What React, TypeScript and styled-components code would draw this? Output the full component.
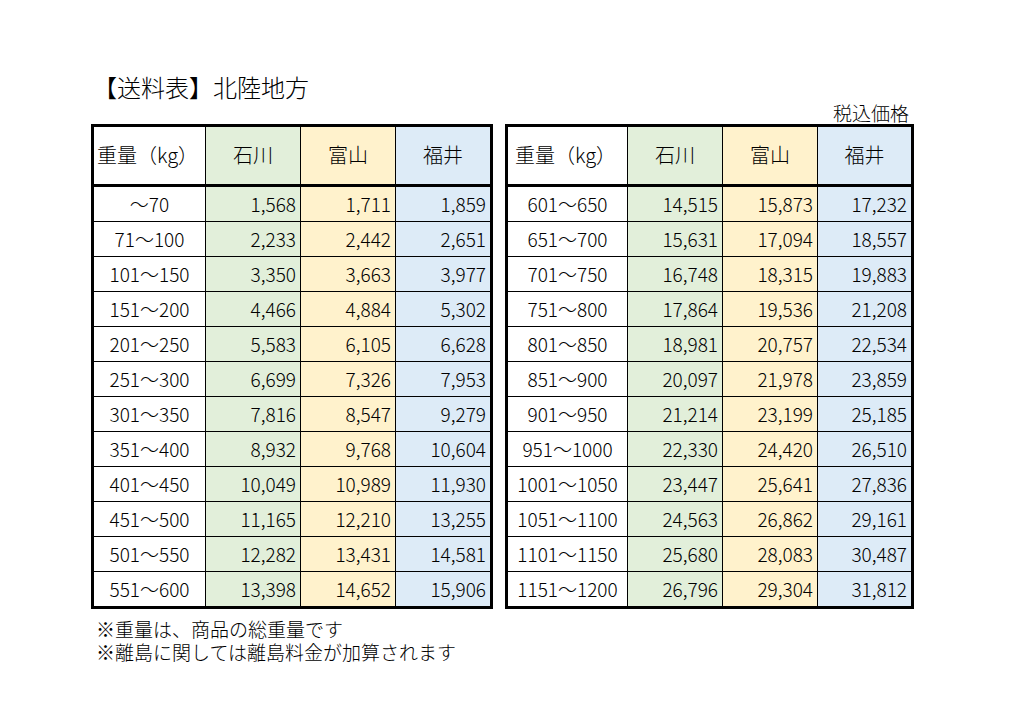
import styled, { createGlobalStyle } from 'styled-components'

const GlobalStyle = createGlobalStyle`
    html, body {
        margin: 0;
        padding: 0;
        background: #fff;
    }
    body {
        font-family: "Noto Sans CJK JP", "Noto Sans", sans-serif;
        font-weight: 300;
        color: #000;
    }
`

type Region = 'ishikawa' | 'toyama' | 'fukui'

const regionColor: Record<Region, string> = {
    ishikawa: '#e2efda',
    toyama: '#fff2cc',
    fukui: '#ddebf7',
}

type Row = [string, number, number, number]

const leftRows: Row[] = [
    ['～70', 1568, 1711, 1859],
    ['71～100', 2233, 2442, 2651],
    ['101～150', 3350, 3663, 3977],
    ['151～200', 4466, 4884, 5302],
    ['201～250', 5583, 6105, 6628],
    ['251～300', 6699, 7326, 7953],
    ['301～350', 7816, 8547, 9279],
    ['351～400', 8932, 9768, 10604],
    ['401～450', 10049, 10989, 11930],
    ['451～500', 11165, 12210, 13255],
    ['501～550', 12282, 13431, 14581],
    ['551～600', 13398, 14652, 15906],
]

const rightRows: Row[] = [
    ['601～650', 14515, 15873, 17232],
    ['651～700', 15631, 17094, 18557],
    ['701～750', 16748, 18315, 19883],
    ['751～800', 17864, 19536, 21208],
    ['801～850', 18981, 20757, 22534],
    ['851～900', 20097, 21978, 23859],
    ['901～950', 21214, 23199, 25185],
    ['951～1000', 22330, 24420, 26510],
    ['1001～1050', 23447, 25641, 27836],
    ['1051～1100', 24563, 26862, 29161],
    ['1101～1150', 25680, 28083, 30487],
    ['1151～1200', 26796, 29304, 31812],
]

const regions: { key: Region; label: string }[] = [
    { key: 'ishikawa', label: '石川' },
    { key: 'toyama', label: '富山' },
    { key: 'fukui', label: '福井' },
]

const Page = styled.div`
    padding: 72px 0 0 91px;
    width: 823px;
`

const Title = styled.h1`
    margin: 0 0 0 2px;
    font-size: 24px;
    font-weight: 300;
    line-height: 30px;
`

const TaxNote = styled.div`
    text-align: right;
    font-size: 19px;
    line-height: 22px;
    padding-right: 5px;
`

const Tables = styled.div`
    display: flex;
    gap: 12px;
`

const Grid = styled.div<{ $weightWidth: number; $lastWidth: number }>`
    display: grid;
    grid-template-columns: ${p => p.$weightWidth}px 95px 95px ${p => p.$lastWidth}px;
    grid-template-rows: 60px repeat(11, 35px) 34px;
    border: 3px solid #000;
`

const Cell = styled.div<{ $region?: Region; $head?: boolean; $lastCol?: boolean; $lastRow?: boolean; $align?: 'center' | 'right' }>`
    box-sizing: border-box;
    display: flex;
    align-items: center;
    justify-content: ${p => (p.$align === 'right' ? 'flex-end' : 'center')};
    padding: 0 ${p => (p.$align === 'right' ? '4px' : '0')} 2px 0;
    background: ${p => (p.$region ? regionColor[p.$region] : '#fff')};
    border-right: ${p => (p.$lastCol ? 'none' : '1px solid #000')};
    border-bottom: ${p => (p.$head ? '3px solid #000' : p.$lastRow ? 'none' : '1px solid #000')};
    font-size: ${p => (p.$head ? '20px' : '19px')};
    white-space: nowrap;
`

const HeadLabel = styled.span`
    margin-right: 4px;
`

const Notes = styled.div`
    margin-top: 8px;
    padding-left: 5px;
    font-size: 19px;
    line-height: 23px;
`

function fmt(n: number) {
    return n.toLocaleString('en-US')
}

function RateTable({ rows, weightWidth, lastWidth }: { rows: Row[]; weightWidth: number; lastWidth: number }) {
    return (
        <Grid $weightWidth={weightWidth} $lastWidth={lastWidth}>
            <Cell $head>
                <HeadLabel>重量（kg）</HeadLabel>
            </Cell>
            {regions.map((r, i) => (
                <Cell key={r.key} $head $region={r.key} $lastCol={i === 2}>
                    {r.label}
                </Cell>
            ))}
            {rows.map((row, ri) => {
                const lastRow = ri === rows.length - 1
                return [
                    <Cell key={`w${ri}`} $lastRow={lastRow}>
                        {row[0]}
                    </Cell>,
                    ...regions.map((r, ci) => (
                        <Cell
                            key={`${r.key}${ri}`}
                            $region={r.key}
                            $align="right"
                            $lastCol={ci === 2}
                            $lastRow={lastRow}
                        >
                            {fmt(row[ci + 1])}
                        </Cell>
                    )),
                ]
            })}
        </Grid>
    )
}

export default function App() {
    return (
        <>
            <GlobalStyle />
            <Page>
                <Title>【送料表】北陸地方</Title>
                <TaxNote>税込価格</TaxNote>
                <Tables>
                    <RateTable rows={leftRows} weightWidth={112} lastWidth={94} />
                    <RateTable rows={rightRows} weightWidth={120} lastWidth={93} />
                </Tables>
                <Notes>
                    <div>※重量は、商品の総重量です</div>
                    <div>※離島に関しては離島料金が加算されます</div>
                </Notes>
            </Page>
        </>
    )
}
